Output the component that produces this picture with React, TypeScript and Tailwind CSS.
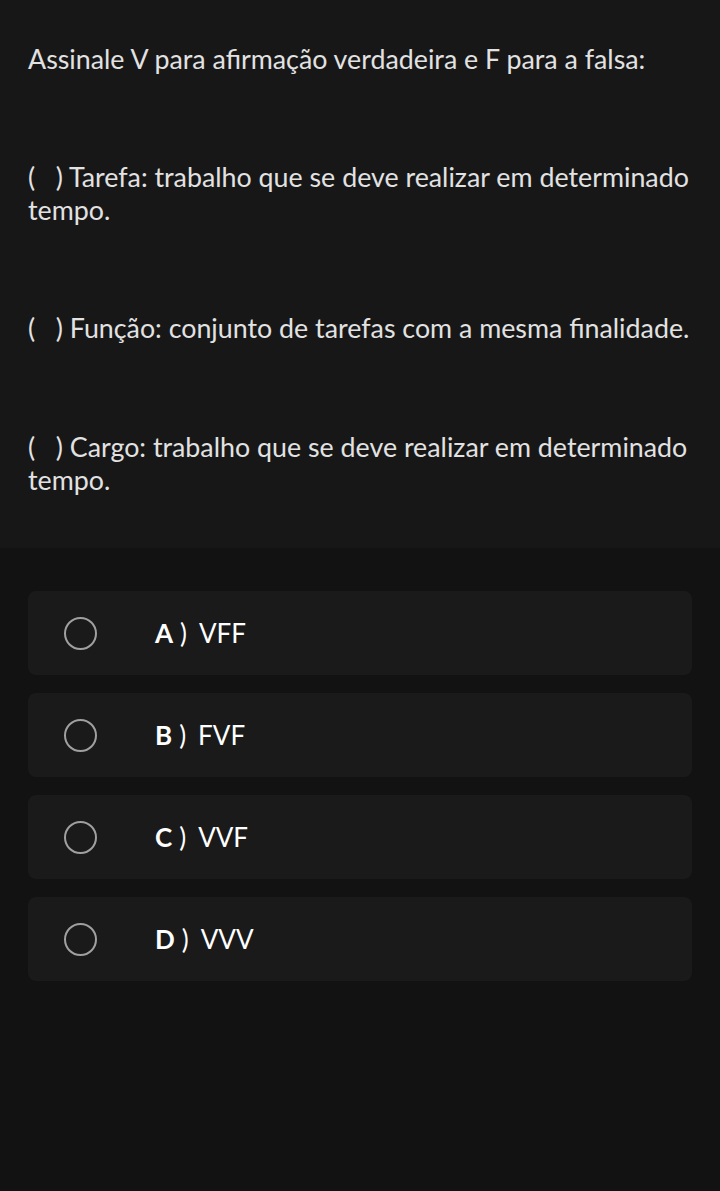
const options = [
  {letter: "A", text: "VFF"},
  {letter: "B", text: "FVF"},
  {letter: "C", text: "VVF"},
  {letter: "D", text: "VVV"},
];

const App = () => {
  return (
    <div className="min-h-[1191px] w-[720px] bg-[#121212] font-['Lato',sans-serif]">
      <div className="bg-[#171717] pl-7 pr-4 pt-[43px] pb-[51px] text-[26.8px] leading-[33px] text-[#e2e2e2]">
        <p>Assinale V para afirmação verdadeira e F para a falsa:</p>
        <p className="mt-[85px]">(&nbsp;&nbsp;&nbsp;) Tarefa: trabalho que se deve realizar em determinado tempo.</p>
        <p className="mt-[85px]">(&nbsp;&nbsp;&nbsp;) Função: conjunto de tarefas com a mesma finalidade.</p>
        <p className="mt-[86px]">(&nbsp;&nbsp;&nbsp;) Cargo: trabalho que se deve realizar em determinado tempo.</p>
      </div>
      <div className="flex flex-col gap-[18px] px-7 pt-[43px]">
        {options.map((o) => (
          <div key={o.letter} className="flex h-[84px] items-center rounded-lg bg-[#1a1a1a]">
            <div className="ml-[36px] h-[33px] w-[33px] rounded-full border-[2.5px] border-[#a0a0a0]" />
            <div className="ml-[58px] flex items-center text-[26px] text-white">
              <span className="font-bold">{o.letter}</span>
              <span className="ml-[7px]">)</span>
              <span className="ml-[12px]">{o.text}</span>
            </div>
          </div>
        ))}
      </div>
    </div>
  );
};

export default App;
